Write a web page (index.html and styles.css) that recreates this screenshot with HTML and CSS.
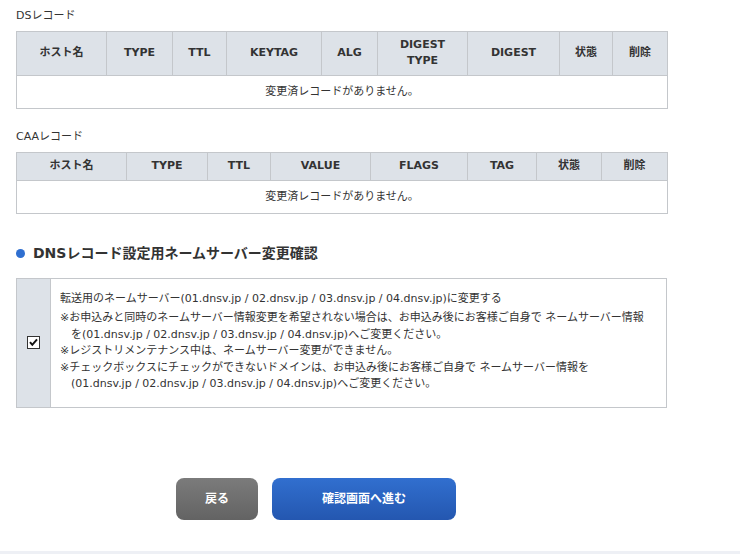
FILE: index.html
```html
<!DOCTYPE html>
<html lang="ja">

<head>
    <meta charset="UTF-8">
    <meta name="viewport" content="width=device-width, initial-scale=1.0">
    <title>DNSレコード設定確認</title>
    <link rel="stylesheet" href="styles.css">
</head>

<body>
    <div class="container">
        <p class="record-label">DSレコード</p>
        <table class="record-table">
            <colgroup>
                <col class="ds-host">
                <col class="ds-type">
                <col class="ds-ttl">
                <col class="ds-keytag">
                <col class="ds-alg">
                <col class="ds-dtype">
                <col class="ds-digest">
                <col class="ds-status">
                <col class="ds-delete">
            </colgroup>
            <thead>
                <tr>
                    <th>ホスト名</th>
                    <th>TYPE</th>
                    <th>TTL</th>
                    <th>KEYTAG</th>
                    <th>ALG</th>
                    <th>DIGEST<br>TYPE</th>
                    <th>DIGEST</th>
                    <th>状態</th>
                    <th>削除</th>
                </tr>
            </thead>
            <tbody>
                <tr>
                    <td colspan="9">変更済レコードがありません。</td>
                </tr>
            </tbody>
        </table>

        <p class="record-label">CAAレコード</p>
        <table class="record-table">
            <colgroup>
                <col class="caa-host">
                <col class="caa-type">
                <col class="caa-ttl">
                <col class="caa-value">
                <col class="caa-flags">
                <col class="caa-tag">
                <col class="caa-status">
                <col class="caa-delete">
            </colgroup>
            <thead>
                <tr>
                    <th>ホスト名</th>
                    <th>TYPE</th>
                    <th>TTL</th>
                    <th>VALUE</th>
                    <th>FLAGS</th>
                    <th>TAG</th>
                    <th>状態</th>
                    <th>削除</th>
                </tr>
            </thead>
            <tbody>
                <tr>
                    <td colspan="8">変更済レコードがありません。</td>
                </tr>
            </tbody>
        </table>

        <h2 class="section-title">DNSレコード設定用ネームサーバー変更確認</h2>
        <div class="confirm-box">
            <div class="confirm-check">
                <span class="checkbox">
                    <svg width="13" height="13" viewBox="0 0 13 13">
                        <rect x="0.5" y="0.5" width="12" height="12" fill="#fff" stroke="#333"/>
                        <path d="M3 6.2 L5.3 8.8 L10 3.4" fill="none" stroke="#111" stroke-width="2"/>
                    </svg>
                </span>
            </div>
            <div class="confirm-text">
                <p class="confirm-main">転送用のネームサーバー(01.dnsv.jp / 02.dnsv.jp / 03.dnsv.jp / 04.dnsv.jp)に変更する</p>
                <ul class="notes">
                    <li>※お申込みと同時のネームサーバー情報変更を希望されない場合は、お申込み後にお客様ご自身で ネームサーバー情報を(01.dnsv.jp / 02.dnsv.jp / 03.dnsv.jp / 04.dnsv.jp)へご変更ください。</li>
                    <li>※レジストリメンテナンス中は、ネームサーバー変更ができません。</li>
                    <li>※チェックボックスにチェックができないドメインは、お申込み後にお客様ご自身で ネームサーバー情報を<br>(01.dnsv.jp / 02.dnsv.jp / 03.dnsv.jp / 04.dnsv.jp)へご変更ください。</li>
                </ul>
            </div>
        </div>

        <div class="button-group">
            <a href="#" class="back-btn">戻る</a>
            <a href="#" class="next-btn">確認画面へ進む</a>
        </div>
    </div>
    <div class="footer-band"></div>
</body>

</html>
```

FILE: styles.css
```css
* {
    box-sizing: border-box;
    margin: 0;
    padding: 0;
}

body {
    font-family: "DejaVu Sans", "Noto Sans CJK JP", sans-serif;
    font-size: 11px;
    line-height: 1.5;
    color: #333;
    background-color: #fff;
}

.container {
    width: 683px;
    padding: 9px 16px 0;
}

.record-label {
    line-height: 14px;
    margin-bottom: 8px;
}

.record-table {
    width: 651px;
    border-collapse: collapse;
    table-layout: fixed;
    margin-bottom: 21px;
}

.record-table th,
.record-table td {
    border: 1px solid #c4c7cb;
    text-align: center;
    font-weight: normal;
}

.record-table th {
    background-color: #dde2e8;
    font-weight: bold;
    line-height: 16px;
    padding: 5px 2px 6px;
}

.record-table td {
    line-height: 16px;
    padding: 8px 4px;
}

/* DS columns */
.ds-host { width: 90px; }
.ds-type { width: 66px; }
.ds-ttl { width: 54px; }
.ds-keytag { width: 95px; }
.ds-alg { width: 56px; }
.ds-dtype { width: 90px; }
.ds-digest { width: 92px; }
.ds-status { width: 53px; }
.ds-delete { width: 55px; }

/* CAA columns */
.caa-host { width: 110px; }
.caa-type { width: 81px; }
.caa-ttl { width: 63px; }
.caa-value { width: 100px; }
.caa-flags { width: 97px; }
.caa-tag { width: 69px; }
.caa-status { width: 65px; }
.caa-delete { width: 66px; }

.section-title {
    display: flex;
    align-items: center;
    font-size: 14px;
    font-weight: bold;
    line-height: 20px;
    margin-top: 29px;
    margin-bottom: 15px;
}

.section-title::before {
    content: "";
    width: 9px;
    height: 9px;
    border-radius: 50%;
    background-color: #2f6fd0;
    margin-right: 8px;
}

.confirm-box {
    display: flex;
    width: 651px;
    border: 1px solid #c4c7cb;
}

.confirm-check {
    width: 34px;
    background-color: #dde2e8;
    border-right: 1px solid #c4c7cb;
    display: flex;
    align-items: center;
    justify-content: center;
}

.checkbox svg {
    display: block;
}

.confirm-text {
    flex: 1;
    padding: 12px 18px 14px 9px;
}

.confirm-main {
    line-height: 16px;
    margin-bottom: 3px;
}

.notes {
    list-style: none;
    line-height: 16.5px;
}

.notes li {
    padding-left: 11px;
    text-indent: -11px;
}

.button-group {
    display: flex;
    gap: 14px;
    padding-left: 160px;
    margin-top: 70px;
}

.back-btn,
.next-btn {
    display: flex;
    align-items: center;
    justify-content: center;
    height: 42px;
    border-radius: 8px;
    color: #fff;
    font-size: 12px;
    font-weight: bold;
    text-decoration: none;
}

.back-btn {
    width: 82px;
    background: linear-gradient(#7b7b7b, #636363);
}

.next-btn {
    width: 184px;
    background: linear-gradient(#316fcf, #2457b0);
}

.footer-band {
    position: absolute;
    left: 0;
    right: 0;
    top: 551px;
    height: 3px;
    background-color: #eef0f5;
}
```
